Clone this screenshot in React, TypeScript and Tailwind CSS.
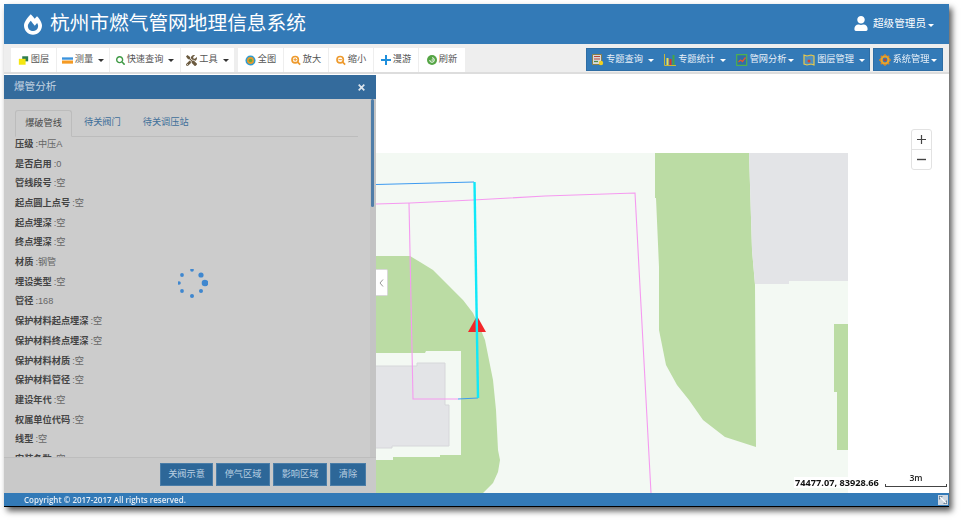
import React from "react";
import { FaFireAlt, FaUser, FaTools, FaSearch } from "react-icons/fa";

const cjk = { fontFamily: '"Liberation Sans","Noto Sans CJK SC",sans-serif' };

function Caret({ white }: { white?: boolean }) {
  return (
    <span
      className={`ml-[3px] inline-block w-0 h-0 border-l-[3px] border-r-[3px] border-t-[3px] border-l-transparent border-r-transparent ${
        white ? "border-t-white" : "border-t-[#333]"
      }`}
    />
  );
}

function ToolBtn({ w, icon, label, caret }: { w: string; icon: React.ReactNode; label: string; caret?: boolean }) {
  return (
    <div className={`${w} h-full bg-white flex items-center justify-center text-[9.2px] text-[#555] gap-[2px]`}>
      {icon}
      <span>{label}</span>
      {caret && <Caret />}
    </div>
  );
}

function MenuBtn({ w, icon, label, gapCaret }: { w: string; icon: React.ReactNode; label: string; gapCaret?: boolean }) {
  return (
    <div className={`${w} h-full flex items-center justify-center text-[9.2px] text-[#e8f0f8] gap-[2px]`}>
      {icon}
      <span>{label}</span>
      <span className={gapCaret ? "ml-0" : "-ml-[3px]"}>
        <Caret white />
      </span>
    </div>
  );
}

const IconLayers = () => (
  <svg width="11" height="11" viewBox="0 0 13 12">
    <path d="M5 1h7v6H5z" fill="#2f7d4f" />
    <path d="M1 4h8v7H1z" fill="#f5e611" />
  </svg>
);
const IconMeasure = () => (
  <svg width="11" height="9" viewBox="0 0 14 10">
    <path d="M0 1h14v3H0z" fill="#3b93dd" />
    <path d="M0 5h14v4H0z" fill="#f59a23" />
  </svg>
);
const IconFull = () => (
  <svg width="11" height="11" viewBox="0 0 12 12">
    <circle cx="6" cy="6" r="5.5" fill="#2f9bd0" />
    <circle cx="6" cy="6" r="3.8" fill="#e79a2b" />
    <circle cx="6" cy="6" r="2" fill="#6aa83a" />
  </svg>
);
const IconZoom = ({ minus }: { minus?: boolean }) => (
  <svg width="10" height="11" viewBox="0 0 12 12">
    <circle cx="5" cy="5" r="3.8" fill="none" stroke="#ee9a2d" strokeWidth="2" />
    <path d="M8 8l3 3" stroke="#ee9a2d" strokeWidth="2" />
    <path d={minus ? "M3 5h4" : "M3 5h4M5 3v4"} stroke="#ee9a2d" strokeWidth="1.2" />
  </svg>
);
const IconPlus = () => (
  <svg width="10" height="10" viewBox="0 0 10 10">
    <path d="M5 0v10M0 5h10" stroke="#1f8fdc" strokeWidth="2" />
  </svg>
);
const IconRefresh = () => (
  <svg width="10" height="10" viewBox="0 0 11 11">
    <circle cx="5.5" cy="5.5" r="5.5" fill="#55a545" />
    <path d="M3 5.5a2.5 2.5 0 1 0 2.5-2.5M5 5.5h2" stroke="#fff" strokeWidth="1.1" fill="none" />
  </svg>
);
const IconQuery = () => (
  <svg width="12" height="12" viewBox="0 0 12 12">
    <path d="M0.5 0.5h9v10h-9z" fill="#d9d9d9" stroke="#8a7f4a" />
    <path d="M2 2.5h6M2 5h6" stroke="#b5483c" strokeWidth="1.2" />
    <path d="M2 7.5h4" stroke="#4a8a4a" strokeWidth="1.2" />
    <circle cx="9" cy="9" r="2.2" fill="#f0d020" />
  </svg>
);
const IconStat = () => (
  <svg width="12" height="12" viewBox="0 0 12 12">
    <path d="M0.5 0v11.5H12" stroke="#c9b83a" fill="none" />
    <path d="M2.5 4h2v7h-2z" fill="#e5e05a" />
    <path d="M5.5 5h2v6h-2z" fill="#d8342b" />
    <path d="M8.5 1h2v10h-2z" fill="#46a546" />
  </svg>
);
const IconNet = () => (
  <svg width="12" height="12" viewBox="0 0 12 12">
    <path d="M0.7 0.7h10v10.6h-10z" fill="#2f6fa8" stroke="#4fb04f" strokeWidth="1.2" />
    <path d="M2.5 8l2-2 2 1.5 3-4" stroke="#e8552b" strokeWidth="1.3" fill="none" />
  </svg>
);
const IconLayerMgr = () => (
  <svg width="12" height="12" viewBox="0 0 12 12">
    <path d="M1 1l3 1 4-1 3 1v9l-3-1-4 1-3-1z" fill="#4d8fc0" stroke="#e8c84a" strokeWidth="1.2" />
    <circle cx="6" cy="7" r="1.5" fill="#d8402b" />
  </svg>
);
const IconGear = () => (
  <svg width="12" height="12" viewBox="0 0 12 12">
    <circle cx="6" cy="6" r="3.6" fill="none" stroke="#e8a52b" strokeWidth="2.4" />
    <path d="M6 0v2M6 10v2M0 6h2M10 6h2M1.8 1.8l1.4 1.4M8.8 8.8l1.4 1.4M1.8 10.2l1.4-1.4M8.8 3.2l1.4-1.4" stroke="#d8842b" strokeWidth="1.4" />
    <circle cx="6" cy="6" r="1.3" fill="#c8402b" />
  </svg>
);

const rows: [string, string][] = [
  ["压级", "中压A"],
  ["是否启用", "0"],
  ["管线段号", "空"],
  ["起点圆上点号", "空"],
  ["起点埋深", "空"],
  ["终点埋深", "空"],
  ["材质", "钢管"],
  ["埋设类型", "空"],
  ["管径", "168"],
  ["保护材料起点埋深", "空"],
  ["保护材料终点埋深", "空"],
  ["保护材料材质", "空"],
  ["保护材料管径", "空"],
  ["建设年代", "空"],
  ["权属单位代码", "空"],
  ["线型", "空"],
  ["安装条数", "空"],
];

const spinner = [
  [13, 0, 1.8],
  [22, 5, 2.6],
  [26, 13, 3.3],
  [22, 21, 2],
  [13, 26, 2],
  [3, 21, 1.9],
  [0, 13, 1.8],
  [3, 5, 1.9],
];

function MapCanvas() {
  return (
    <svg className="absolute inset-0" width="945" height="419" viewBox="4 74 945 419">
      <rect x="4" y="153" width="844" height="340" fill="#f3f9f3" />
      <path
        d="M655 153L749 153L750 185L752 250L755 285L756 447L725 437L703 420L689 400L677 385L666 365L662 345L659 330L659 267L656 198L655 198Z"
        fill="#bbdca4"
      />
      <path d="M749 153H848V281H789V284H755L752 250L750 185Z" fill="#e3e4e7" />
      <path d="M834 324H848V450H837V392H834Z" fill="#bbdca4" />
      <path
        d="M370 256H410L420 262L433 270L450 287L463 300L473 313L480 328L485 340L493 380L496 410L498 450L500 460L498 472L493 483L483 493H370Z"
        fill="#bbdca4"
      />
      <path d="M370 353H425L426 351H461V455H440V457H393V460H370Z" fill="#f3f9f3" />
      <path d="M370 366H417V363H445V405H449V446H392V448H370Z" fill="#e3e4e7" stroke="#d6d7da" strokeWidth="1" />
      <path d="M376 204L410 203L473 200L545 196L635 193L651 493" fill="none" stroke="#f59af0" strokeWidth="1.1" />
      <path d="M409 203L413 399L458 399" fill="none" stroke="#f59af0" strokeWidth="1.1" />
      <path d="M376 184.5L474 182" fill="none" stroke="#3d9bf0" strokeWidth="1.2" />
      <path d="M458 399L478 398" fill="none" stroke="#3d9bf0" strokeWidth="1.2" />
      <path d="M468 332L486 332L477 316Z" fill="#f2282a" />
      <path d="M474.5 182L478 398" fill="none" stroke="#10e8f8" strokeWidth="2.4" />
    </svg>
  );
}

export default function App() {
  return (
    <div className="w-[962px] h-[521px] bg-white pt-1 pl-1 overflow-hidden" style={cjk}>
      <div className="w-[945px] h-[503px] flex flex-col bg-white shadow-[3px_4px_6px_rgba(0,0,0,0.65)] border-b border-b-black [filter:blur(0.35px)]">
        {/* header */}
        <header className="h-10 shrink-0 bg-[#337ab7] flex items-center justify-between text-white pl-[20px] pr-[15px]">
          <div className="flex items-center gap-[8px]">
            <FaFireAlt className="w-[18px] h-[21px]" />
            <span className="text-[19.7px] leading-none">杭州市燃气管网地理信息系统</span>
          </div>
          <div className="flex items-center gap-[5px]">
            <FaUser className="w-[14px] h-[15px]" />
            <span className="text-[10.6px] flex items-center">
              超级管理员
              <span className="-ml-px">
                <Caret white />
              </span>
            </span>
          </div>
        </header>

        {/* toolbar */}
        <div className="h-[30px] shrink-0 bg-[#eeeeee] border-b-2 border-b-[#dddddd] flex items-start justify-between pt-1 pl-[7px] pr-[6px]">
          <div className="flex gap-1 h-6">
            <div className="flex gap-px h-full">
              <ToolBtn w="w-[45px]" icon={<IconLayers />} label="图层" />
              <ToolBtn w="w-[52px]" icon={<IconMeasure />} label="测量" caret />
              <ToolBtn w="w-[70px]" icon={<FaSearch className="w-[9px] h-[9px] text-[#3f9a45]" />} label="快速查询" caret />
              <ToolBtn w="w-[53px]" icon={<FaTools className="w-[11px] h-[11px] text-[#6b5a3f]" />} label="工具" caret />
            </div>
            <div className="flex gap-px h-full">
              <ToolBtn w="w-[45px]" icon={<IconFull />} label="全图" />
              <ToolBtn w="w-[44px]" icon={<IconZoom />} label="放大" />
              <ToolBtn w="w-[44px]" icon={<IconZoom minus />} label="缩小" />
              <ToolBtn w="w-[44px]" icon={<IconPlus />} label="漫游" />
              <ToolBtn w="w-[46px]" icon={<IconRefresh />} label="刷新" />
            </div>
          </div>
          <div className="flex gap-[3px] h-[23px]">
            <div className="flex h-full bg-[#337ab7] border border-[#2e6da4]">
              <MenuBtn w="w-[72px]" icon={<IconQuery />} label="专题查询" gapCaret />
              <MenuBtn w="w-[72px]" icon={<IconStat />} label="专题统计" gapCaret />
              <MenuBtn w="w-[68px]" icon={<IconNet />} label="管网分析" />
              <MenuBtn w="w-[70px]" icon={<IconLayerMgr />} label="图层管理" gapCaret />
            </div>
            <div className="flex h-full bg-[#337ab7] border border-[#2e6da4]">
              <MenuBtn w="w-[68px]" icon={<IconGear />} label="系统管理" />
            </div>
          </div>
        </div>

        {/* map */}
        <main className="relative flex-1 bg-white overflow-hidden">
          <MapCanvas />

          {/* zoom control */}
          <div className="absolute left-[907px] top-[55px] w-[21px] flex flex-col rounded-[3px] border border-[#e2e2e2] bg-white text-[#333]">
            <div className="h-5 flex items-center justify-center border-b border-b-[#e2e2e2]">
              <svg width="9" height="9" viewBox="0 0 9 9">
                <path d="M4.5 0v9M0 4.5h9" stroke="#444" strokeWidth="1.2" />
              </svg>
            </div>
            <div className="h-[19px] flex items-center justify-center">
              <svg width="9" height="9" viewBox="0 0 9 9">
                <path d="M0 4.5h9" stroke="#444" strokeWidth="1.4" />
              </svg>
            </div>
          </div>

          {/* collapse handle */}
          <div className="absolute left-[372px] top-[195px] w-3 h-[27px] bg-white rounded-r-[2px] border border-l-0 border-[#d8d8d8] flex items-center justify-center">
            <svg width="5" height="8" viewBox="0 0 5 8">
              <path d="M4 0.5L1 4l3 3.5" fill="none" stroke="#999" strokeWidth="1" />
            </svg>
          </div>

          {/* coordinates and scale */}
          <div className="absolute left-[790px] bottom-[5px] px-px bg-white text-[9.2px] leading-[11px] text-[#111] font-['Open_Sans',sans-serif] font-bold">
            74477.07, 83928.66
          </div>
          <div className="absolute left-[881px] bottom-[6px] w-[62px] h-[14px] flex flex-col items-center">
            <span className="text-[8.6px] leading-[11px] text-[#222] font-['Open_Sans',sans-serif] font-semibold">3m</span>
            <div className="mt-auto w-full h-[3px] shrink-0 border-b border-l border-r border-[#444]" />
          </div>

          {/* panel */}
          <section className="absolute left-0 top-px bottom-0 w-[372px] flex flex-col bg-[#cccccc]">
            <div className="h-6 shrink-0 bg-[#346b9c] flex items-center justify-between pl-[10px] pr-[11px] text-[#c4d4e2] text-[10.6px]">
              <span>爆管分析</span>
              <svg width="7" height="7" viewBox="0 0 7 7">
                <path d="M0.7 0.7l5.6 5.6M6.3 0.7L0.7 6.3" stroke="#dde6ee" strokeWidth="1.7" />
              </svg>
            </div>
            <div className="relative flex-1 overflow-hidden pt-[11px] pl-[11px]">
              <div className="w-[343px] h-[27px] flex items-end border-b border-b-[#bcbcbc] text-[9.2px]">
                <div className="w-[57px] h-[27px] -mb-px flex items-center justify-center rounded-t-[3px] border border-[#bcbcbc] border-b-[#cccccc] bg-[#cccccc] text-[#4a4a4a]">
                  爆破管线
                </div>
                <div className="ml-[12px] h-[26px] flex items-center text-[#3f6f9a]">待关阀门</div>
                <div className="ml-[22px] h-[26px] flex items-center text-[#3f6f9a]">待关调压站</div>
              </div>
              <div className="-mt-[2px] text-[9.2px]">
                {rows.map(([k, v]) => (
                  <div key={k} className="h-[19.7px] flex items-center text-[#666]">
                    <span className="font-bold text-[#444]">{k}</span>
                    <span className="ml-[2px]">:{v}</span>
                  </div>
                ))}
              </div>

              {/* scrollbar */}
              <div className="absolute right-0 top-0 bottom-0 w-[6px] bg-[#c4c4c4]">
                <div className="ml-[1px] w-[3px] h-[108px] rounded-[2px] bg-[#4f7da8]" />
              </div>

              {/* spinner */}
              <svg className="absolute left-[174px] top-[170px]" width="30" height="30" viewBox="-1 -1 30 30">
                {spinner.map(([x, y, r], i) => (
                  <circle key={i} cx={x} cy={y} r={r} fill="#3f87cf" />
                ))}
              </svg>
            </div>
            <div className="h-[36px] shrink-0 border-t border-t-[#bdbdbd] bg-[#c9c9c9] flex items-start justify-end gap-[3px] pt-[5px] pr-[10px] text-[9.2px] text-[#b9cfe2]">
              <div className="w-[53px] h-[23px] flex items-center justify-center bg-[#2d6798] border border-[#4a7da8]">关阀示意</div>
              <div className="w-[54px] h-[23px] flex items-center justify-center bg-[#2d6798] border border-[#4a7da8]">停气区域</div>
              <div className="w-[54px] h-[23px] flex items-center justify-center bg-[#2d6798] border border-[#4a7da8]">影响区域</div>
              <div className="w-[36px] h-[23px] flex items-center justify-center bg-[#2d6798] border border-[#4a7da8]">清除</div>
            </div>
          </section>
        </main>

        {/* footer */}
        <footer className="h-[13px] shrink-0 bg-[#337ab7] flex items-center justify-between pl-[20px] pr-[1px] pt-px text-[8px] text-[#e6eef6] font-['Open_Sans',sans-serif] font-semibold">
          <span>Copyright © 2017-2017 All rights reserved.</span>
          <svg width="10" height="10" viewBox="0 0 10 10">
            <path d="M0 0h10v10H0z" fill="#cfd8e2" />
            <path d="M1 1h4L1 5zM9 9H5l4-4z" fill="#6d8296" />
            <path d="M2 2l6 6" stroke="#fff" strokeWidth="1.2" />
          </svg>
        </footer>
      </div>
    </div>
  );
}
